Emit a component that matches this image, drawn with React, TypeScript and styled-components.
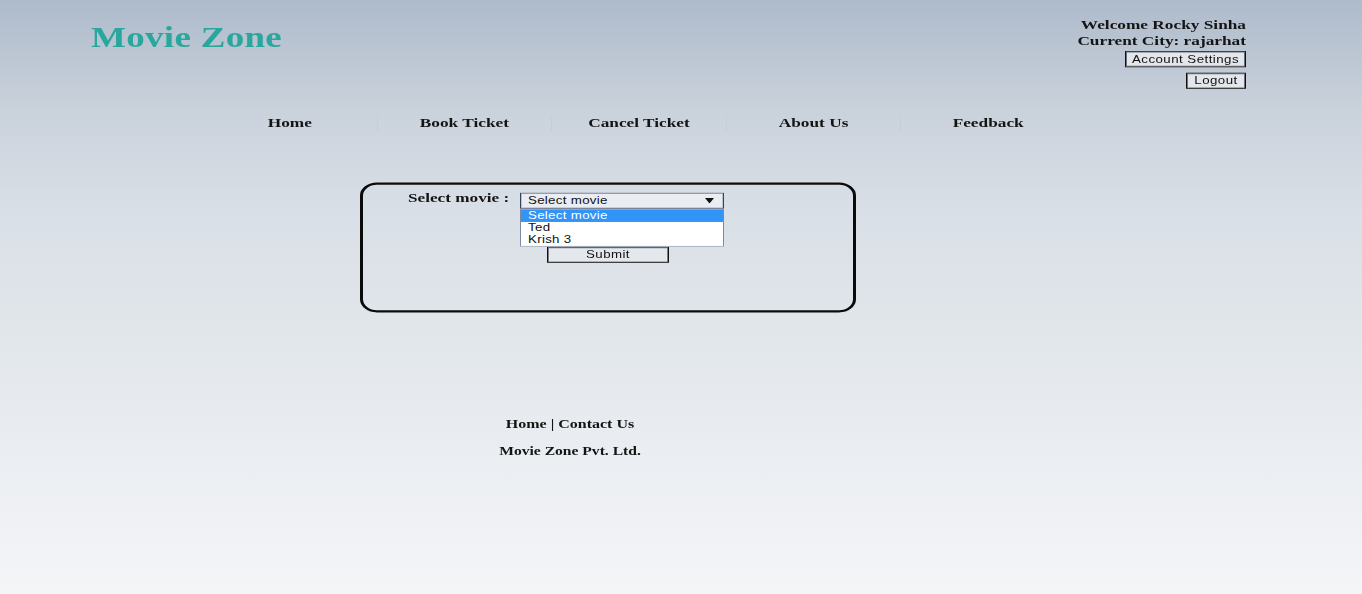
import React from "react";
import styled, { createGlobalStyle } from "styled-components";

const GlobalStyle = createGlobalStyle`
  html, body {
    margin: 0;
    padding: 0;
    height: 100%;
    overflow: hidden;
  }
  body {
    background: linear-gradient(180deg, #aebbcb 0%, #c9d1db 18%, #d9dfe6 35%, #e1e6eb 55%, #ebeef2 78%, #f4f5f7 100%);
    color: #141414;
    font-family: "Liberation Serif", "Times New Roman", serif;
  }
`;

/* The reference is a 1366x768 page squeezed to 594px tall; the stage reproduces that. */
const Stage = styled.div`
  width: 1362px;
  height: 768px;
  margin-bottom: -174px;
  transform: scaleY(0.7734);
  transform-origin: 0 0;
  display: flex;
  flex-direction: column;
`;

const Header = styled.header`
  display: flex;
  justify-content: space-between;
  align-items: flex-start;
  padding: 0 116px 0 91px;
`;

const Logo = styled.h1`
  margin: 29px 0 0;
  font-family: "Liberation Serif", "Times New Roman", serif;
  font-weight: bold;
  font-size: 37px;
  line-height: 40px;
  letter-spacing: 0.3px;
  color: #29a79d;
`;

const UserPanel = styled.div`
  margin-top: 22.5px;
  display: flex;
  flex-direction: column;
  align-items: flex-end;
`;

const UserLine = styled.div`
  font-weight: bold;
  font-size: 17.3px;
  line-height: 20.7px;
  white-space: nowrap;
`;

const HeaderButton = styled.button<{ $top: number; $width: number }>`
  margin-top: ${(p) => p.$top}px;
  width: ${(p) => p.$width}px;
  height: 20.7px;
  padding: 0;
  box-sizing: border-box;
  background: #e3e7ec;
  border: 1px solid #111;
  box-shadow: inset 0 0 0 1px #6b6f75;
  font-family: "Liberation Sans", Arial, sans-serif;
  font-size: 13.3px;
  letter-spacing: 0.45px;
  color: #111;
  cursor: pointer;
`;

const Nav = styled.nav`
  display: flex;
  margin: 34px 0 0 202px;
`;

const NavItem = styled.a<{ $first?: boolean }>`
  width: 174.6px;
  height: 20.7px;
  box-sizing: border-box;
  text-align: center;
  line-height: 20.7px;
  font-weight: bold;
  font-size: 17.3px;
  color: #141414;
  text-decoration: none;
  white-space: nowrap;
  border-left: 1px solid ${(p) => (p.$first ? "transparent" : "#c6cdd6")};
`;

const Panel = styled.section`
  margin: 66.6px 0 0 360px;
  width: 496px;
  height: 168px;
  box-sizing: border-box;
  border: 3px solid #0b0b0b;
  border-radius: 17px;
  padding: 6.6px 0 0 45px;
  display: flex;
  flex-direction: column;
`;

const FieldRow = styled.div`
  display: flex;
  align-items: flex-start;
`;

const Label = styled.label`
  width: 112px;
  font-weight: bold;
  font-size: 17.2px;
  line-height: 20.7px;
  white-space: nowrap;
`;

const SelectWrap = styled.div`
  position: relative;
  margin-top: 3.3px;
  width: 204px;
  height: 20.7px;
`;

const SelectBox = styled.div`
  height: 100%;
  box-sizing: border-box;
  display: flex;
  align-items: center;
  justify-content: space-between;
  padding: 0 9px 0 7px;
  background: #eaedf1;
  border: 1px solid #34425c;
  box-shadow: inset 0 0 0 1px #b9c3d2;
  font-family: "Liberation Sans", Arial, sans-serif;
  font-size: 13.3px;
  letter-spacing: 0.3px;
  color: #111;
`;

const OptionList = styled.ul`
  position: absolute;
  top: 100%;
  left: 0;
  width: 100%;
  margin: 0;
  padding: 0;
  list-style: none;
  box-sizing: border-box;
  background: #ffffff;
  border: 1px solid #7c8ba1;
  z-index: 2;
`;

const Option = styled.li<{ $selected?: boolean }>`
  height: 15.7px;
  line-height: 15.7px;
  padding-left: 7px;
  font-family: "Liberation Sans", Arial, sans-serif;
  font-size: 13.3px;
  letter-spacing: 0.3px;
  background: ${(p) => (p.$selected ? "#3194f6" : "transparent")};
  color: ${(p) => (p.$selected ? "#ffffff" : "#111")};
`;

const SubmitButton = styled.button`
  align-self: flex-start;
  margin: 49px 0 0 139px;
  width: 122px;
  height: 20.7px;
  padding: 0;
  box-sizing: border-box;
  background: #e4e8ec;
  border: 1px solid #111;
  box-shadow: inset 0 0 0 1px #7a7e84;
  font-family: "Liberation Sans", Arial, sans-serif;
  font-size: 13.3px;
  letter-spacing: 0.4px;
  color: #111;
`;

const Footer = styled.footer`
  margin-top: 133.3px;
  width: 1140px;
  text-align: center;
`;

const FooterLine = styled.p<{ $size: number; $gap: number }>`
  margin: ${(p) => p.$gap}px 0 0;
  font-weight: bold;
  font-size: ${(p) => p.$size}px;
  line-height: 20px;
  color: #141414;
`;

const FooterLink = styled.a`
  color: inherit;
  text-decoration: none;
`;

const Arrow = () => (
  <svg width="9" height="7" viewBox="0 0 9 7" aria-hidden="true">
    <polygon points="0,0 9,0 4.5,7" fill="#111" />
  </svg>
);

export default function App() {
  return (
    <>
      <GlobalStyle />
      <Stage>
        <Header>
          <Logo>Movie Zone</Logo>
          <UserPanel>
            <UserLine>Welcome Rocky Sinha</UserLine>
            <UserLine>Current City: rajarhat</UserLine>
            <HeaderButton $top={2} $width={121}>Account Settings</HeaderButton>
            <HeaderButton $top={7.8} $width={60}>Logout</HeaderButton>
          </UserPanel>
        </Header>

        <Nav>
          <NavItem href="#" $first>Home</NavItem>
          <NavItem href="#">Book Ticket</NavItem>
          <NavItem href="#">Cancel Ticket</NavItem>
          <NavItem href="#">About Us</NavItem>
          <NavItem href="#">Feedback</NavItem>
        </Nav>

        <Panel>
          <FieldRow>
            <Label>Select movie :</Label>
            <SelectWrap>
              <SelectBox>
                <span>Select movie</span>
                <Arrow />
              </SelectBox>
              <OptionList>
                <Option $selected>Select movie</Option>
                <Option>Ted</Option>
                <Option>Krish 3</Option>
              </OptionList>
            </SelectWrap>
          </FieldRow>
          <SubmitButton>Submit</SubmitButton>
        </Panel>

        <Footer>
          <FooterLine $size={16} $gap={0}>
            <FooterLink href="#">Home</FooterLink> | <FooterLink href="#">Contact Us</FooterLink>
          </FooterLine>
          <FooterLine $size={15.6} $gap={14.9}>Movie Zone Pvt. Ltd.</FooterLine>
        </Footer>
      </Stage>
    </>
  );
}
